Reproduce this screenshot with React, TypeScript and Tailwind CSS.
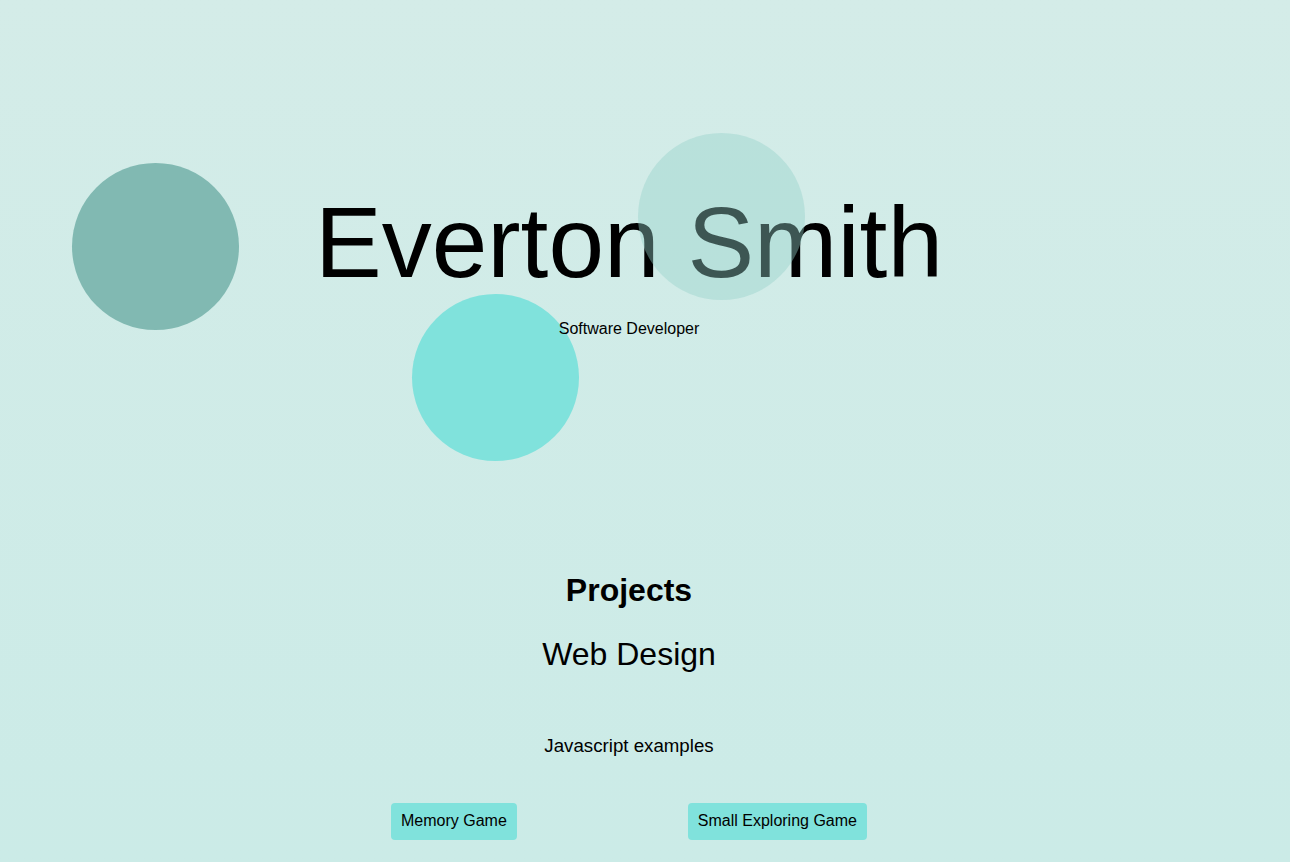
export default function App() {
  return (
    <div
      className="relative min-h-screen w-full overflow-hidden bg-linear-to-b from-[#d4ece8] to-[#cbebe7] text-black"
      style={{ fontFamily: '"Liberation Sans", Arial, sans-serif' }}
    >
      {/* floating circles */}
      <div className="absolute left-[72px] top-[163px] h-[167px] w-[167px] rounded-full bg-[#81b9b2]" />
      <div className="absolute left-[412px] top-[294px] h-[167px] w-[167px] rounded-full bg-[#80e2dc]" />

      <div className="relative w-[1258px] pb-[22px] text-center">
        <header className="pt-[185px]">
          <h1 className="text-[100px] font-normal leading-[115px]">Everton Smith</h1>
          <p className="mt-[20px] text-[16px] leading-[18.4px]">Software Developer</p>
        </header>

        <section className="mt-[234px]">
          <h2 className="text-[32px] font-bold leading-[36.8px]">Projects</h2>
          <h3 className="mt-[27px] text-[32px] font-normal leading-[36.8px]">Web Design</h3>
          <p className="mt-[62px] text-[18.7px] leading-[21.5px]">Javascript examples</p>
          <div className="mt-[46px] flex justify-center gap-[171px]">
            <button className="rounded-[4px] bg-[#80e2dc] px-[10px] py-[9.3px] text-[16px] leading-[18.4px] text-black">
              Memory Game
            </button>
            <button className="rounded-[4px] bg-[#80e2dc] px-[10px] py-[9.3px] text-[16px] leading-[18.4px] text-black">
              Small Exploring Game
            </button>
          </div>
        </section>
      </div>

      {/* translucent circle that sits over the name */}
      <div className="pointer-events-none absolute left-[638px] top-[133px] h-[167px] w-[167px] rounded-full bg-[rgba(148,208,202,0.41)]" />
    </div>
  );
}
